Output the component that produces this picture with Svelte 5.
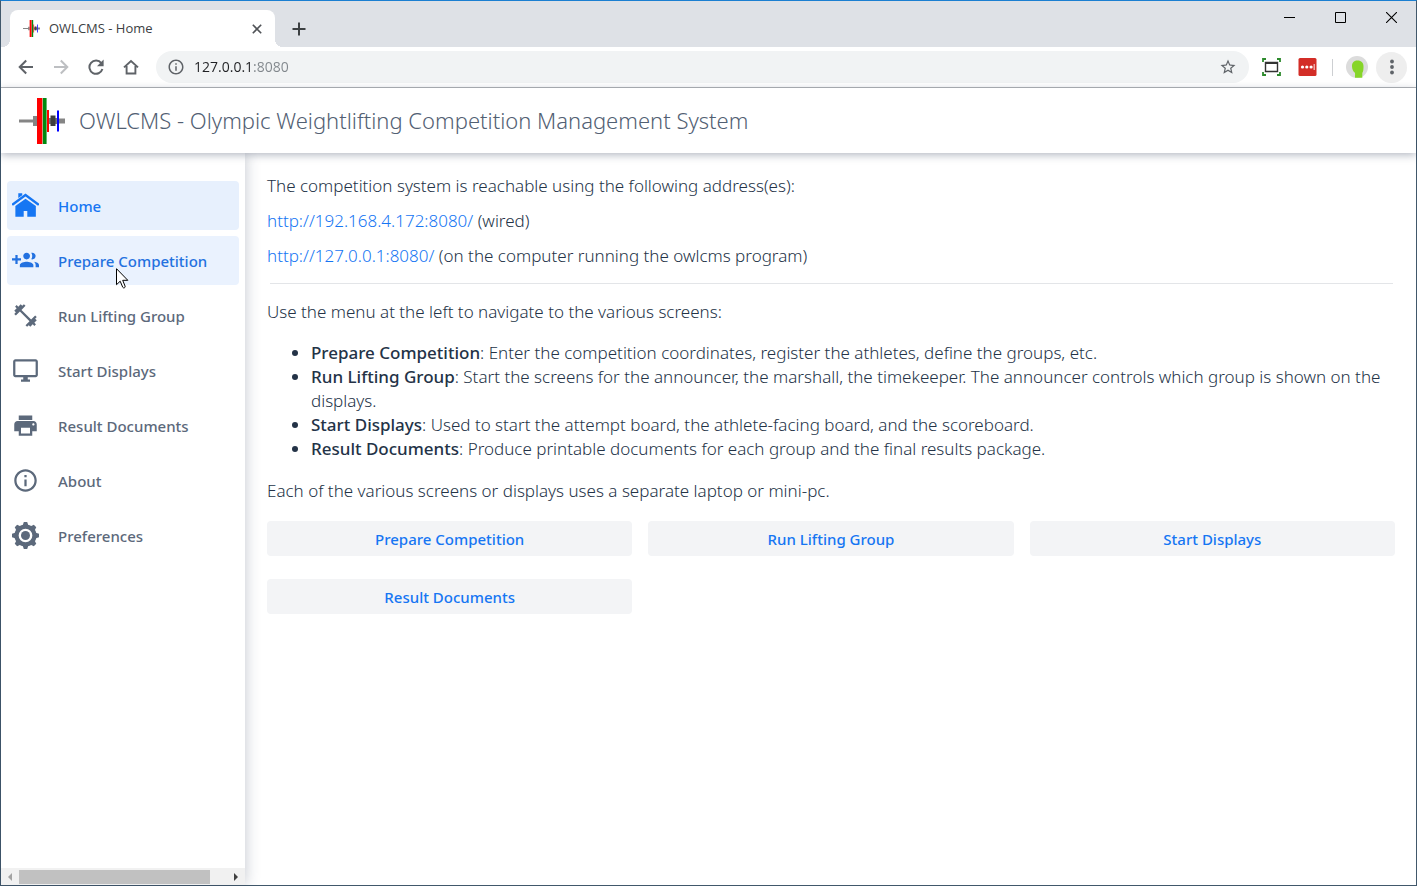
<script>
  const menu = [
    { label: 'Home', icon: 'home', state: 'current' },
    { label: 'Prepare Competition', icon: 'group', state: 'hovered' },
    { label: 'Run Lifting Group', icon: 'lift', state: '' },
    { label: 'Start Displays', icon: 'display', state: '' },
    { label: 'Result Documents', icon: 'print', state: '' },
    { label: 'About', icon: 'about', state: '' },
    { label: 'Preferences', icon: 'gear', state: '' }
  ];

  const notes = [
    ['Prepare Competition', 'Enter the competition coordinates, register the athletes, define the groups, etc.'],
    ['Run Lifting Group', 'Start the screens for the announcer, the marshall, the timekeeper. The announcer controls which group is shown on the displays.'],
    ['Start Displays', 'Used to start the attempt board, the athlete-facing board, and the scoreboard.'],
    ['Result Documents', 'Produce printable documents for each group and the final results package.']
  ];

  const actions = ['Prepare Competition', 'Run Lifting Group', 'Start Displays', 'Result Documents'];
  const teeth = [0, 45, 90, 135, 180, 225, 270, 315];

  const paths = {
    group: 'M8 10H5V7H3v3H0v2h3v3h2v-3h3v-2zm10 1c1.66 0 2.99-1.34 2.99-3S19.66 5 18 5c-.32 0-.63.05-.91.14.57.81.9 1.79.9 2.86s-.34 2.04-.9 2.86c.28.09.59.14.91.14zm-5 0c1.66 0 2.99-1.34 2.99-3S14.66 5 13 5c-1.66 0-3 1.34-3 3s1.34 3 3 3zm6.62 2.16c.83.73 1.38 1.66 1.38 2.84v2h3v-2c0-1.54-2.37-2.49-4.38-2.84zM13 13c-2 0-6 1-6 3v2h12v-2c0-2-4-3-6-3z',
    lift: 'M20.57 14.86L22 13.43 20.57 12 17 15.57 8.43 7 12 3.43 10.57 2 9.14 3.43 7.71 2 5.57 4.14 4.14 2.71 2.71 4.14l1.43 1.43L2 7.71l1.43 1.43L2 10.57 3.43 12 7 8.43 15.57 17 12 20.57 13.43 22l1.43-1.43L16.29 22l2.14-2.14 1.43 1.43 1.43-1.43-1.43-1.43L22 16.29z',
    display: 'M21 2H3c-1.1 0-2 .9-2 2v12c0 1.1.9 2 2 2h7v2H8v2h8v-2h-2v-2h7c1.1 0 2-.9 2-2V4c0-1.1-.9-2-2-2zm0 14H3V4h18v12z',
    print: 'M19 8H5c-1.66 0-3 1.34-3 3v6h4v4h12v-4h4v-6c0-1.66-1.34-3-3-3zm-3 11H8v-5h8v5zm3-7c-.55 0-1-.45-1-1s.45-1 1-1 1 .45 1 1-.45 1-1 1zm-1-9H6v4h12V3z',
    about: 'M11 17h2v-6h-2v6zm1-15C6.48 2 2 6.48 2 12s4.48 10 10 10 10-4.48 10-10S17.52 2 12 2zm0 18c-4.41 0-8-3.59-8-8s3.59-8 8-8 8 3.59 8 8-3.59 8-8 8zM11 9h2V7h-2v2z',
    home: 'M12 1.4L0 10.200v1.500l1.200.2L12 4.100l10.800 7.800 1.200-.2v-1.500zM5.600 1.200h3.500v1.600L5.600 5.300zM12 5.900L3 12.400V22h7.400v-5.100h3.200V22H21.200v-9.600z'
  };

  let address = $state('127.0.0.1:8080');
</script>

{#snippet barbell(size)}
  <svg width={size} height={size} viewBox="0 0 46 46" aria-hidden="true">
    <path fill="#858585" d="M0 21.500h15v3H0zM14 18h4v10h-4zM40 20.500h6v5h-6z" />
    <path fill="#777" d="M29.500 20h9v6h-9z" />
    <path fill="#f00" d="M18 0h5.400v46H18zM28 12h2v22H28z" />
    <path fill="#008a10" d="M23.800 0h3.800v46h-3.800z" />
    <path fill="#404040" d="M31.500 17.500h5v10.500h-5z" />
    <path fill="#00f" d="M38 12.500h2v21H38z" />
  </svg>
{/snippet}

<div class="window">
  <div class="tabstrip">
    <div class="tab">
      {@render barbell(17)}
      <span class="tab-title">OWLCMS - Home</span>
      <button class="plain" aria-label="Close tab">
        <svg width="12" height="12" viewBox="0 0 12 12"><path d="M1.800 1.800l8.400 8.400M10.200 1.800l-8.400 8.400" stroke="#505357" stroke-width="1.600" /></svg>
      </button>
    </div>
    <button class="plain new-tab" aria-label="New tab">
      <svg width="14" height="14" viewBox="0 0 14 14"><path d="M7 .5v13M.5 7h13" stroke="#3c4043" stroke-width="2" /></svg>
    </button>
    <div class="controls">
      <button class="plain" aria-label="Minimize">
        <svg width="11" height="11" viewBox="0 0 11 11"><path d="M0 5.500h11" stroke="#000" /></svg>
      </button>
      <button class="plain" aria-label="Maximize">
        <svg width="11" height="11" viewBox="0 0 11 11"><path d="M.5.5h10v10H.5z" fill="none" stroke="#000" /></svg>
      </button>
      <button class="plain" aria-label="Close window">
        <svg width="11" height="11" viewBox="0 0 11 11"><path d="M0 0l11 11M11 0L0 11" stroke="#000" stroke-width="1.100" /></svg>
      </button>
    </div>
  </div>

  <div class="toolbar">
    <div class="nav-buttons">
      <button class="plain" aria-label="Back">
        <svg width="16" height="16" viewBox="0 0 16 16"><path d="M15 8H2M8.200 1.500L1.700 8l6.500 6.500" fill="none" stroke="#5f6368" stroke-width="2" /></svg>
      </button>
      <button class="plain" aria-label="Forward">
        <svg width="16" height="16" viewBox="0 0 16 16"><path d="M1 8h13M7.800 1.500L14.300 8l-6.500 6.500" fill="none" stroke="#bdbfc2" stroke-width="2" /></svg>
      </button>
      <button class="plain" aria-label="Reload">
        <svg width="16" height="16" viewBox="0 0 16 16"><path d="M13.300 4.200A6.600 6.600 0 1 0 14.400 10" fill="none" stroke="#5f6368" stroke-width="2" /><path d="M15.600.6v6.700H9z" fill="#5f6368" /></svg>
      </button>
      <button class="plain" aria-label="Home page">
        <svg width="16" height="16" viewBox="0 0 16 16"><path d="M1 8.400L8 2l7 6.400M3.600 7v7.500h8.800V7" fill="none" stroke="#5f6368" stroke-width="1.900" /></svg>
      </button>
    </div>
    <div class="omnibox">
      <svg width="18" height="18" viewBox="0 0 24 24" fill="#5f6368" aria-hidden="true"><path d={paths.about} /></svg>
      <input aria-label="Address" bind:value={address} />
      <button class="plain" aria-label="Bookmark this page">
        <svg width="18" height="18" viewBox="0 0 24 24" fill="#5f6368"><path d="M22 9.240l-7.190-.62L12 2 9.190 8.630 2 9.240l5.460 4.730L5.820 21 12 17.270 18.180 21l-1.630-7.030L22 9.240zM12 15.400l-3.760 2.270 1-4.280-3.320-2.880 4.380-.38L12 6.100l1.710 4.040 4.380.38-3.320 2.880 1 4.280L12 15.400z" /></svg>
      </button>
    </div>
    <div class="extensions">
      <button class="plain" aria-label="Screen capture">
        <svg width="19" height="18" viewBox="0 0 19 18" fill="none">
          <path d="M1 4V1h3M15 1h3v3M18 14v3h-3M4 17H1v-3" stroke="#2c8a2c" stroke-width="1.800" />
          <path d="M3.500 4.500h12v9h-12z" stroke="#333" stroke-width="1.400" /><path d="M3 5h13" stroke="#333" stroke-width="2" />
        </svg>
      </button>
      <button class="plain" aria-label="Password manager">
        <svg width="19" height="18" viewBox="0 0 19 18"><rect x=".5" width="18" height="18" rx="1.500" fill="#d32d27" /><g fill="#fff"><circle cx="4.500" cy="9" r="1.600" /><circle cx="8.800" cy="9" r="1.600" /><circle cx="13.100" cy="9" r="1.600" /><path d="M15.700 6h.9v6h-.9z" /></g></svg>
      </button>
      <span class="divider"></span>
      <button class="plain" aria-label="Profile">
        <svg width="22" height="22" viewBox="0 0 22 22"><circle cx="11" cy="11" r="11" fill="#dcdcdc" /><path d="M11.500 4.500c-4 0-5.500 2.500-5.500 5.800 0 3 1.200 5.200 2.600 6.200.8.700.4 1.700.4 5.300h7.300V17c1-1.300 1.200-3.500 1.200-6.500 0-3.500-2-6-6-6z" fill="#86d528" /></svg>
      </button>
      <button class="plain more" aria-label="Browser menu">
        <svg width="4" height="16" viewBox="0 0 4 16" fill="#5f6368"><circle cx="2" cy="2.500" r="1.900" /><circle cx="2" cy="8" r="1.900" /><circle cx="2" cy="13.500" r="1.900" /></svg>
      </button>
    </div>
  </div>

  <header>
    {@render barbell(46)}
    <h1>OWLCMS - Olympic Weightlifting Competition Management System</h1>
  </header>

  <div class="body">
    <aside>
      <nav>
        {#each menu as item}
          <a href="#{item.icon}" class={item.state}>
            <svg width="27" height="27" viewBox="0 0 24 24" fill="currentColor" aria-hidden="true">
              {#if item.icon === 'gear'}
                <path fill-rule="evenodd" d="M12 2.200a9.800 9.800 0 1 0 0 19.600a9.800 9.800 0 1 0 0-19.600zM12 5.900a6.100 6.100 0 1 1 0 12.200a6.100 6.100 0 1 1 0-12.200z" />
                {#each teeth as angle}
                  <path d="M9.300 3.500L10.500 0h3l1.200 3.500z" transform="rotate({angle} 12 12)" />
                {/each}
                <circle cx="12" cy="12" r="4" />
              {:else}
                <path d={paths[item.icon]} />
              {/if}
            </svg>
            <span>{item.label}</span>
            {#if item.state === 'hovered'}
              <svg class="pointer" width="13" height="21" viewBox="0 0 13 21" aria-hidden="true"><path d="M.5.700v16l3.700-3.500 2.500 6c.6 1.300 3 .6 2.400-1L6.700 12.300h5.100z" fill="#fff" stroke="#000" /></svg>
            {/if}
          </a>
        {/each}
      </nav>
      <div class="scrollbar">
        <svg width="4" height="8" viewBox="0 0 4 8"><path d="M4 0v8L0 4z" fill="#a3a3a3" /></svg>
        <div class="track"><div class="thumb"></div></div>
        <svg width="4" height="8" viewBox="0 0 4 8"><path d="M0 0v8l4-4z" fill="#404040" /></svg>
      </div>
    </aside>

    <main>
      <div class="addresses">
        <p>The competition system is reachable using the following address(es):</p>
        <p><a href="http://192.168.4.172:8080/">http://192.168.4.172:8080/</a> (wired)</p>
        <p><a href="http://127.0.0.1:8080/">http://127.0.0.1:8080/</a> (on the computer running the owlcms program)</p>
      </div>
      <hr />
      <p>Use the menu at the left to navigate to the various screens:</p>
      <ul>
        {#each notes as [name, text]}
          <li><strong>{name}</strong>: {text}</li>
        {/each}
      </ul>
      <p>Each of the various screens or displays uses a separate laptop or mini-pc.</p>
      <div class="actions">
        {#each actions as action}
          <button>{action}</button>
        {/each}
      </div>
    </main>
  </div>
</div>

<style>
  :global(body) {
    margin: 0;
  }
  .window,
  .window * {
    box-sizing: border-box;
  }
  .window {
    display: flex;
    flex-direction: column;
    min-height: 100vh;
    border: 1px solid #41586b;
    border-top-color: #1b7fd1;
    background: #fff;
    color: #243347;
    font-family: 'Noto Sans', 'Open Sans', sans-serif;
    font-size: 17px;
    font-weight: 300;
    line-height: 24px;
  }
  svg {
    display: block;
    flex: none;
  }
  .plain {
    display: grid;
    place-items: center;
    padding: 0;
    border: 0;
    background: none;
  }
  a {
    color: #1676f3;
    text-decoration: none;
  }

  .tabstrip {
    display: flex;
    height: 46px;
    padding: 9px 19px 0 9px;
    background: #dee1e6;
  }
  .tab {
    position: relative;
    display: flex;
    align-items: center;
    width: 265px;
    padding: 0 12px 0 13px;
    border-radius: 8px 8px 0 0;
    background: #fff;
  }
  .tab::before,
  .tab::after {
    content: '';
    position: absolute;
    bottom: 0;
    width: 8px;
    height: 8px;
  }
  .tab::before {
    right: 100%;
    background: radial-gradient(circle at 0 0, transparent 8px, #fff 8px);
  }
  .tab::after {
    left: 100%;
    background: radial-gradient(circle at 100% 0, transparent 8px, #fff 8px);
  }
  .tab-title {
    flex: 1;
    padding: 0 0 2px 9px;
    color: #3c4043;
    font-family: 'Open Sans', sans-serif;
    font-size: 13px;
    font-weight: 400;
  }
  .new-tab {
    margin-left: 17px;
  }
  .controls {
    display: flex;
    gap: 40px;
    height: 14px;
    margin-left: auto;
  }

  .toolbar {
    display: flex;
    align-items: center;
    height: 41px;
    padding: 0 9px 0 17px;
    border-bottom: 1px solid #b3b5b8;
  }
  .nav-buttons {
    display: flex;
    gap: 19px;
  }
  .omnibox {
    display: flex;
    flex: 1;
    align-items: center;
    height: 32px;
    margin: 0 13px 0 17px;
    padding: 0 12px 0 11px;
    border-radius: 16px;
    background: #f1f3f4;
  }
  .omnibox input {
    flex: 1;
    min-width: 0;
    padding: 0 0 0 9px;
    border: 0;
    outline: 0;
    background: linear-gradient(90deg, #202124 68px, #80868b 68px);
    background-clip: text;
    -webkit-text-fill-color: transparent;
    color: #202124;
    font: 400 14px/20px 'Open Sans', sans-serif;
  }
  .extensions {
    display: flex;
    align-items: center;
  }
  .extensions > .plain + .plain:not(.more) {
    margin-left: 17px;
  }
  .divider {
    width: 1px;
    height: 17px;
    margin: 0 13px 0 15px;
    background: #cdcfd2;
  }
  .more {
    width: 31px;
    height: 31px;
    margin-left: 8px;
    border-radius: 50%;
    background: #eee;
  }

  header {
    position: relative;
    z-index: 2;
    display: flex;
    align-items: center;
    gap: 14px;
    height: 65px;
    padding: 0 18px;
    background: #fff;
    box-shadow: 0 2px 8px rgba(36, 52, 80, 0.35);
  }
  h1 {
    margin: 0;
    padding-bottom: 2px;
    color: #526073;
    font-size: 22px;
    font-weight: 300;
    line-height: 32px;
  }

  .body {
    display: flex;
    flex: 1;
  }
  aside {
    z-index: 1;
    display: flex;
    flex: none;
    flex-direction: column;
    justify-content: space-between;
    width: 244px;
    box-shadow: 0 0 14px rgba(36, 52, 80, 0.28);
  }
  nav {
    display: flex;
    flex-direction: column;
    gap: 6px;
    padding: 28px 6px;
  }
  nav a {
    position: relative;
    display: flex;
    align-items: center;
    gap: 19px;
    height: 49px;
    padding: 0 5px;
    border-radius: 4px;
    color: #5c697b;
    font-size: 15px;
    font-weight: 500;
  }
  nav .current {
    background: #e7f0fd;
    color: #1676f3;
  }
  nav .hovered {
    background: #eaf2fe;
    color: #2371e0;
  }
  .pointer {
    position: absolute;
    top: 32px;
    left: 109px;
  }
  .scrollbar {
    display: flex;
    align-items: center;
    gap: 7px;
    height: 17px;
    padding: 0 7px;
    background: #f1f1f1;
  }
  .track {
    flex: 1;
  }
  .thumb {
    width: 92%;
    height: 14px;
    background: #c1c1c1;
  }

  main {
    flex: 1;
    min-width: 0;
    padding: 21px 21px 20px 22px;
  }
  p {
    margin: 0;
  }
  .addresses {
    display: grid;
    gap: 11px;
  }
  hr {
    height: 1px;
    margin: 15px 2px 16px 3px;
    border: 0;
    background: #e3e5e8;
  }
  ul {
    margin: 17px 0 18px;
    padding-left: 44px;
  }
  strong {
    font-weight: 500;
  }
  .actions {
    display: grid;
    grid-template-columns: repeat(3, 1fr);
    gap: 23px 16px;
    margin-top: 18px;
  }
  .actions button {
    height: 35px;
    padding: 0 12px;
    border: 0;
    border-radius: 4px;
    background: #f3f4f6;
    color: #1676f3;
    font: 500 15px/24px 'Noto Sans', sans-serif;
  }
</style>
